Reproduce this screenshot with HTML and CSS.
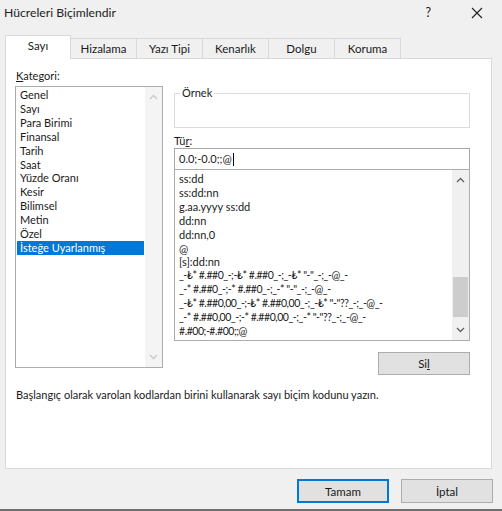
FILE: index.html
```html
<!DOCTYPE html>
<html lang="tr">
<head>
    <meta charset="UTF-8">
    <title>Hücreleri Biçimlendir</title>
    <link rel="stylesheet" href="styles.css">
</head>
<body>
    <div class="dialog">
        <div class="titlebar">
            <span class="title">Hücreleri Biçimlendir</span>
            <span class="help">?</span>
            <svg class="close" width="12" height="12" viewBox="0 0 12 12">
                <path d="M1 1 L11 11 M11 1 L1 11" stroke="#222" stroke-width="1.1" fill="none"/>
            </svg>
        </div>

        <div class="tabs">
            <div class="tab active">Sayı</div>
            <div class="tab">Hizalama</div>
            <div class="tab">Yazı Tipi</div>
            <div class="tab">Kenarlık</div>
            <div class="tab">Dolgu</div>
            <div class="tab">Koruma</div>
        </div>

        <div class="panel">
            <div class="columns">
                <div class="col-left">
                    <div class="label"><u>K</u>ategori:</div>
                    <div class="listbox category">
                        <ul class="items">
                            <li>Genel</li>
                            <li>Sayı</li>
                            <li>Para Birimi</li>
                            <li>Finansal</li>
                            <li>Tarih</li>
                            <li>Saat</li>
                            <li>Yüzde Oranı</li>
                            <li>Kesir</li>
                            <li>Bilimsel</li>
                            <li>Metin</li>
                            <li>Özel</li>
                            <li class="selected">İsteğe Uyarlanmış</li>
                        </ul>
                        <div class="scrollbar disabled">
                            <svg class="arrow" width="9" height="6" viewBox="0 0 9 6"><path d="M1 5 L4.5 1.5 L8 5" stroke="currentColor" stroke-width="1.3" fill="none"/></svg>
                            <div class="track"></div>
                            <svg class="arrow" width="9" height="6" viewBox="0 0 9 6"><path d="M1 1 L4.5 4.5 L8 1" stroke="currentColor" stroke-width="1.3" fill="none"/></svg>
                        </div>
                    </div>
                </div>

                <div class="col-right">
                    <div class="sample">
                        <div class="legend">Örnek</div>
                    </div>
                    <div class="label type-label">Tü<u>r</u>:</div>
                    <div class="input">0.0;-0.0;;@<span class="caret"></span></div>
                    <div class="listbox formats">
                        <ul class="items">
                            <li>ss:dd</li>
                            <li>ss:dd:nn</li>
                            <li>g.aa.yyyy ss:dd</li>
                            <li>dd:nn</li>
                            <li>dd:nn,0</li>
                            <li>@</li>
                            <li>[s]:dd:nn</li>
                            <li class="code">_-₺* #.##0_-;-₺* #.##0_-;_-₺* "-"_-;_-@_-</li>
                            <li class="code">_-* #.##0_-;-* #.##0_-;_-* "-"_-;_-@_-</li>
                            <li class="code">_-₺* #.##0,00_-;-₺* #.##0,00_-;_-₺* "-"??_-;_-@_-</li>
                            <li class="code">_-* #.##0,00_-;-* #.##0,00_-;_-* "-"??_-;_-@_-</li>
                            <li class="code">#.#00;-#.#00;;@</li>
                        </ul>
                        <div class="scrollbar">
                            <svg class="arrow" width="9" height="6" viewBox="0 0 9 6"><path d="M1 5 L4.5 1.5 L8 5" stroke="currentColor" stroke-width="1.3" fill="none"/></svg>
                            <div class="track">
                                <div class="thumb"></div>
                            </div>
                            <svg class="arrow" width="9" height="6" viewBox="0 0 9 6"><path d="M1 1 L4.5 4.5 L8 1" stroke="currentColor" stroke-width="1.3" fill="none"/></svg>
                        </div>
                    </div>
                    <div class="delete-row">
                        <button class="btn delete">Si<u>l</u></button>
                    </div>
                </div>
            </div>

            <p class="hint">Başlangıç olarak varolan kodlardan birini kullanarak sayı biçim kodunu yazın.</p>
        </div>

        <div class="footer">
            <button class="btn default">Tamam</button>
            <button class="btn">İptal</button>
        </div>
    </div>
</body>
</html>
```

FILE: styles.css
```css
body {
    margin: 0;
    background: #f0f0f0;
    font-family: 'Lato', 'Noto Sans', sans-serif;
    font-size: 11px;
    color: #1a1a1a;
}

.dialog {
    width: 502px;
    height: 511px;
    box-sizing: border-box;
    border-bottom: 2px solid #6f6f6f;
    overflow: hidden;
}

.titlebar {
    height: 35px;
    display: flex;
    align-items: flex-start;
    padding: 5px 0 0 4px;
    box-sizing: border-box;
}

.title {
    font-size: 12.2px;
    line-height: 16px;
    color: #222;
}

.help {
    margin-left: auto;
    font-size: 12.5px;
    line-height: 16px;
}

.close {
    margin: 2px 19px 0 40px;
}

.tabs {
    display: flex;
    margin-left: 5px;
    height: 23px;
    align-items: flex-end;
}

.tab {
    width: 66px;
    height: 20px;
    box-sizing: border-box;
    border: 1px solid #d9d9d9;
    border-bottom: none;
    border-left: none;
    text-align: center;
    line-height: 19px;
    background: #f0f0f0;
    font-size: 11.5px;
}

.tab.active {
    height: 24px;
    margin-bottom: -1px;
    background: #fff;
    border-left: 1px solid #d9d9d9;
    position: relative;
    line-height: 20px;
    padding-bottom: 3px;
}

.panel {
    margin: 0 10px 0 5px;
    height: 411px;
    box-sizing: border-box;
    background: #fff;
    border: 1px solid #d9d9d9;
    padding: 0 0 0 9px;
}

.columns {
    display: flex;
    gap: 11px;
}

.col-left {
    width: 148px;
    padding-top: 10px;
}

.label {
    line-height: 14px;
    padding-left: 1px;
    height: 17px;
}

.listbox {
    display: flex;
    border: 1px solid #acacac;
    box-sizing: border-box;
    background: #fff;
}

.category {
    height: 282px;
}

.items {
    list-style: none;
    margin: 0;
    padding: 1px 1px 0;
    flex: 1;
    min-width: 0;
}

.items li {
    line-height: 13.9px;
    padding-left: 3px;
    white-space: nowrap;
    overflow: hidden;
}

.items li.code {
    font-size: 10.5px;
    letter-spacing: -0.45px;
}

.items li.selected {
    background: #0078d7;
    color: #fff;
}

.scrollbar {
    width: 17px;
    background: #f0f0f0;
    display: flex;
    flex-direction: column;
    align-items: center;
    color: #606060;
}

.scrollbar.disabled {
    background: #f4f4f4;
    color: #c8c8c8;
}

.arrow {
    margin: 7px 0;
    flex: none;
}

.track {
    flex: 1;
    align-self: stretch;
    display: flex;
    flex-direction: column;
    justify-content: flex-end;
}

.thumb {
    height: 40px;
    margin: 0 1px 3px;
    background: #cdcdcd;
}

.col-right {
    width: 296px;
}

.sample {
    margin-top: 34px;
    height: 35px;
    box-sizing: border-box;
    border: 1px solid #dcdcdc;
}

.legend {
    margin: -8px 0 0 5px;
    padding: 0 2px;
    width: max-content;
    background: #fff;
    line-height: 14px;
}

.type-label {
    margin-top: 6px;
    height: 14px;
    padding-left: 0;
}

.input {
    height: 21px;
    box-sizing: border-box;
    border: 1px solid #a8a8a8;
    border-bottom: none;
    padding: 0 4px;
    line-height: 20px;
    display: flex;
    align-items: center;
}

.caret {
    display: inline-block;
    width: 1px;
    height: 13px;
    background: #000;
    margin-left: 1px;
}

.formats {
    height: 172px;
}

.formats .items {
    padding-top: 2px;
}

.delete-row {
    display: flex;
    justify-content: flex-end;
    margin-top: 11px;
}

.btn {
    font-family: inherit;
    font-size: 11.5px;
    color: #1a1a1a;
    width: 92px;
    height: 24px;
    background: #e1e1e1;
    border: 1px solid #adadad;
    padding: 0;
}

.btn.delete {
    height: 23px;
}

.btn.default {
    border: 2px solid #0078d7;
}

.hint {
    margin: 13px 0 0 1px;
    line-height: 14px;
}

.footer {
    display: flex;
    justify-content: flex-end;
    gap: 12px;
    padding: 10px 9px 0 0;
}
```
